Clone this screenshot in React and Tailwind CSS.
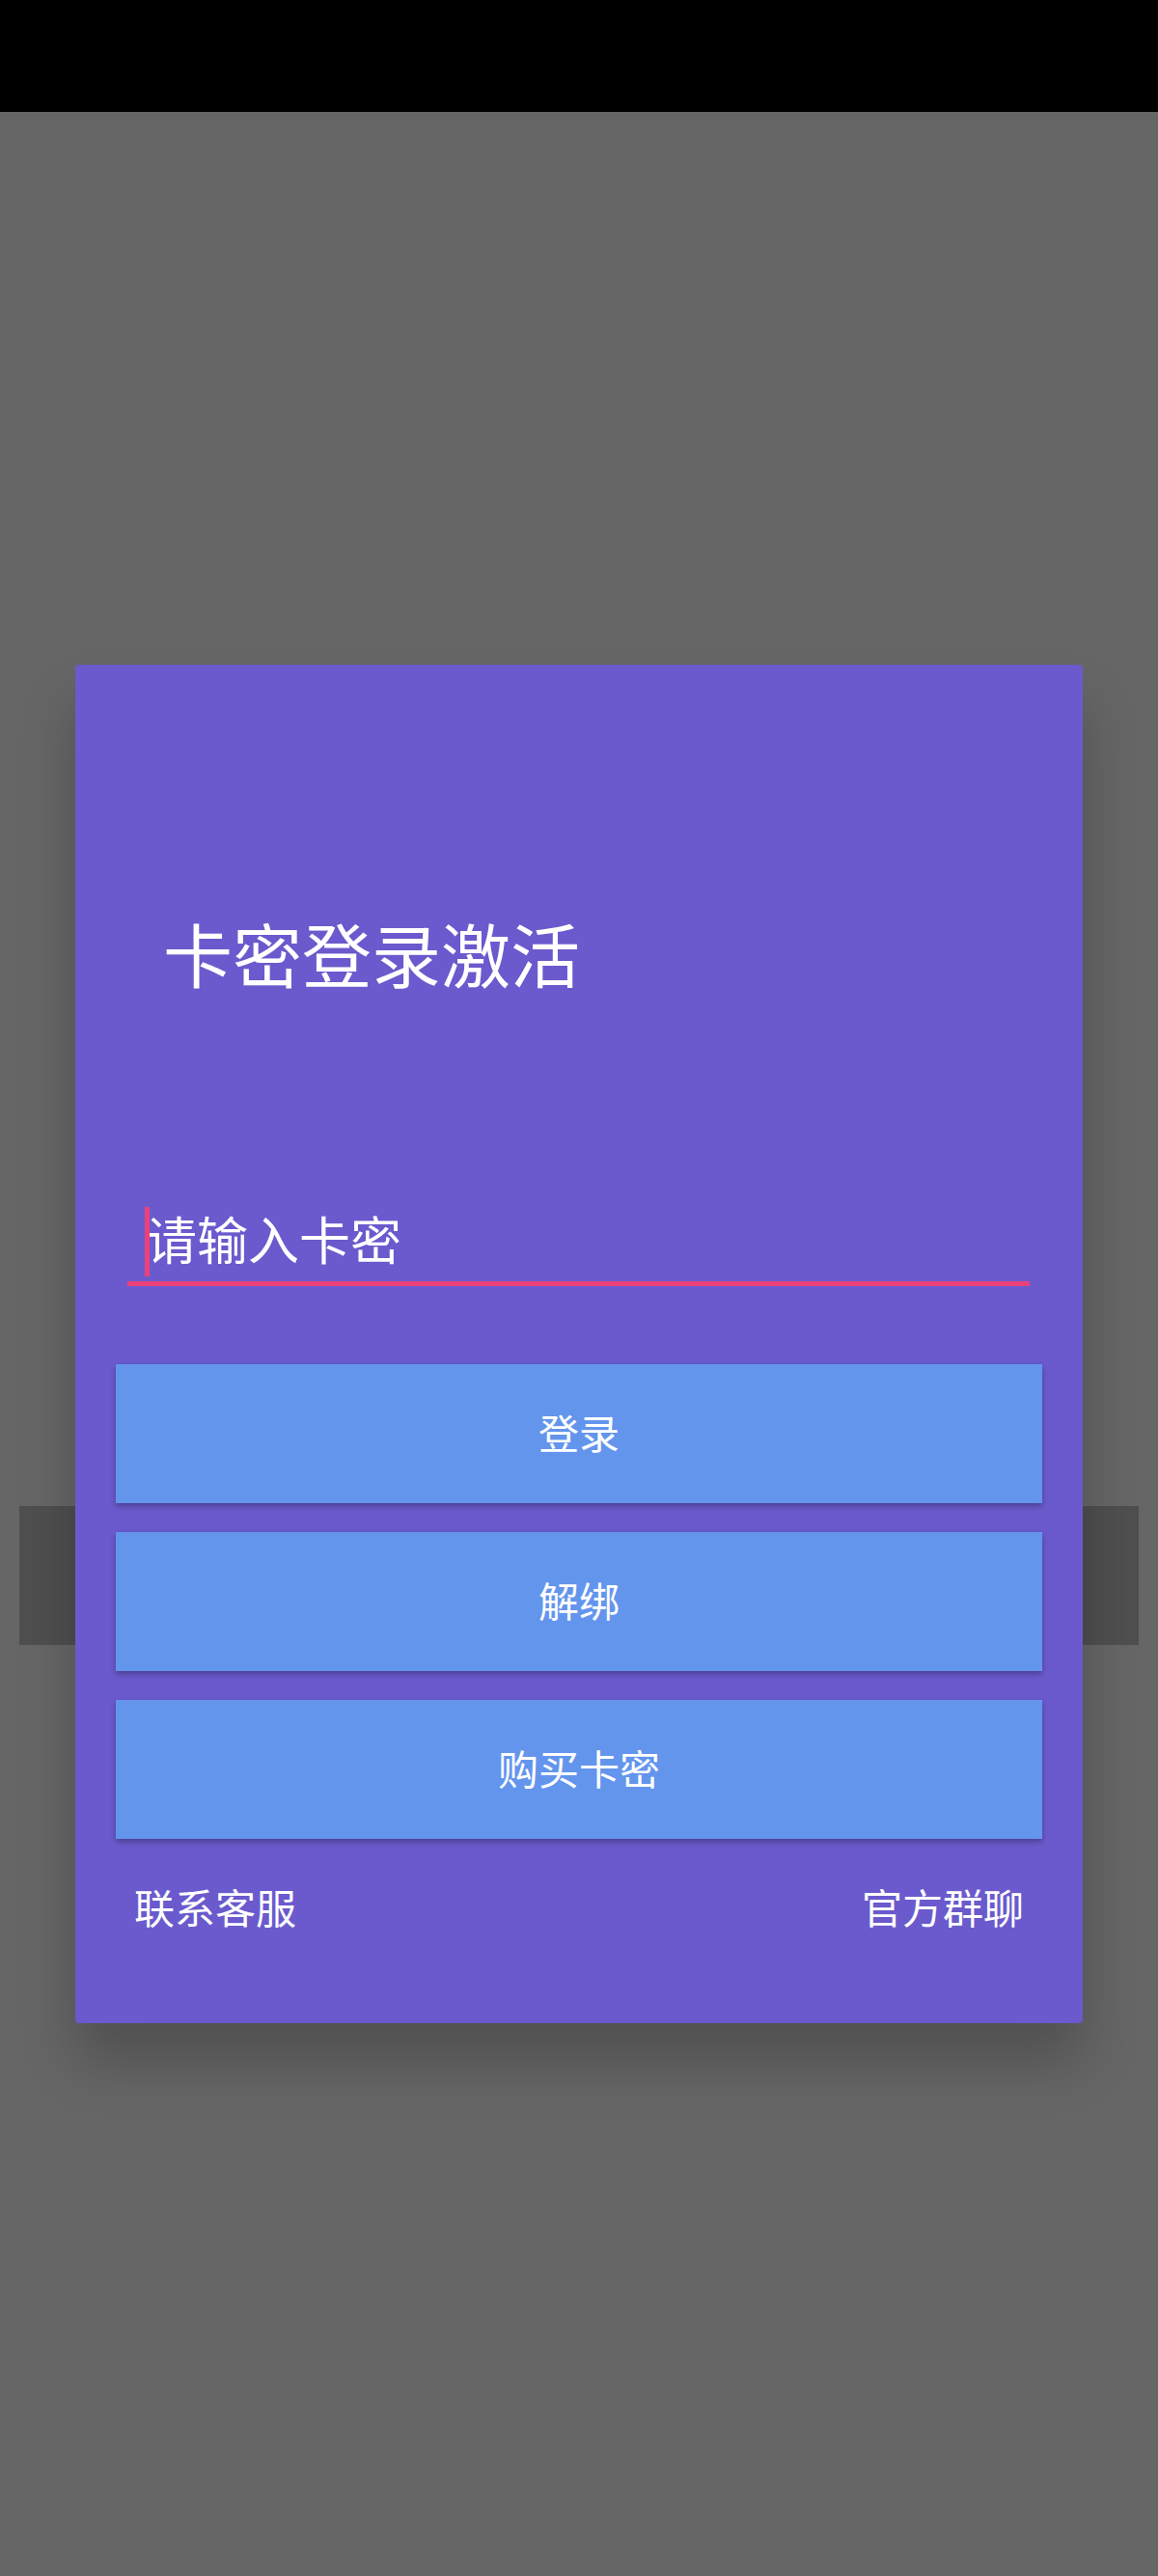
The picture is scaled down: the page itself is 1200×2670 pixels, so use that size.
import React from 'react';

const font = { fontFamily: '"Noto Sans CJK SC", "Noto Sans", sans-serif' };

const ActionButton = ({ label }) => (
  <button className="h-[144px] w-full pb-[6px] bg-[#6495ed] text-white text-[42px] shadow-[0_3px_6px_rgba(0,0,0,0.3)] flex items-center justify-center">
    {label}
  </button>
);

const App = () => {
  return (
    <div className="relative h-[2670px] w-[1200px] bg-[#666666] overflow-hidden" style={font}>
      {/* status bar */}
      <div className="h-[116px] bg-black" />

      {/* dimmed content behind dialog */}
      <div className="mt-[1445px] mx-[20px] h-[144px] bg-[#4f4f4f]" />

      {/* dialog */}
      <div className="absolute left-[78px] top-[689px] w-[1044px] h-[1408px] bg-[#6a5acd] rounded-[4px] shadow-[0_40px_60px_rgba(0,0,0,0.22)] flex flex-col">
        <div className="mt-[248px] pl-[91px] h-[100px] leading-[100px] text-[72px] text-white">
          卡密登录激活
        </div>

        <div className="relative mt-[206px] ml-[54px] mr-[55px] h-[90px] pb-[4px] border-b-[5px] border-[#ec407a] flex items-center">
          <span className="absolute left-[18px] top-[8px] w-[5px] h-[72px] bg-[#ec407a]" />
          <span className="pl-[19px] text-[53px] leading-none text-white">请输入卡密</span>
        </div>

        <div className="mt-[81px] mx-[42px] flex flex-col gap-[30px]">
          <ActionButton label="登录" />
          <ActionButton label="解绑" />
          <ActionButton label="购买卡密" />
        </div>

        <div className="mt-[39px] px-[61px] h-[60px] flex items-center justify-between text-white text-[42px]">
          <span>联系客服</span>
          <span>官方群聊</span>
        </div>
      </div>
    </div>
  );
};

export default App;
